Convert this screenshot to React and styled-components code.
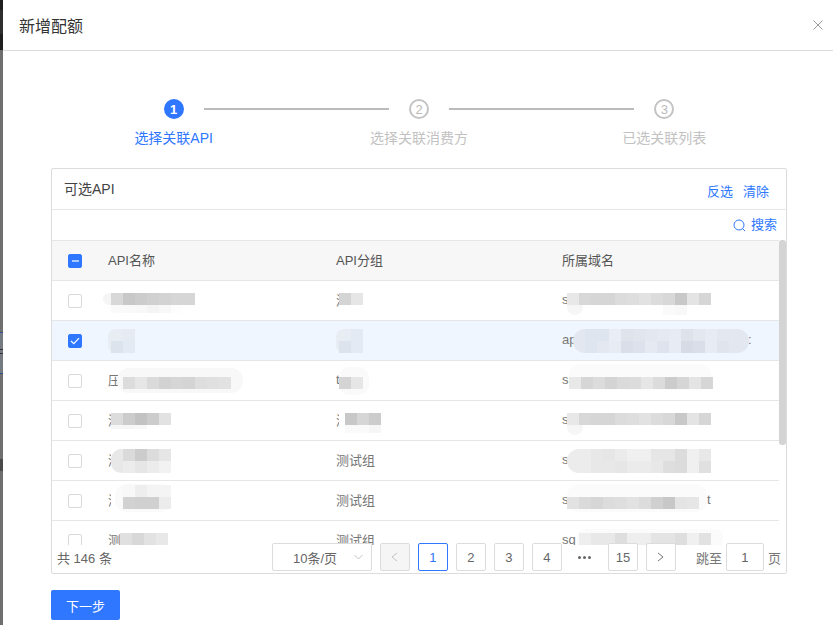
import React from 'react';
import styled, { createGlobalStyle } from 'styled-components';

const BLUE = '#2f77ff';

const GlobalStyle = createGlobalStyle`
  html, body {
    margin: 0;
    padding: 0;
    height: 100%;
    overflow: hidden;
    background: #fff;
  }
  * {
    box-sizing: border-box;
  }
  body {
    font-family: "Liberation Sans", "Noto Sans CJK SC", sans-serif;
    font-size: 13px;
    color: #666;
  }
`;

const Page = styled.div`
  display: flex;
  width: 833px;
  height: 625px;
  overflow: hidden;
`;

const Backdrop = styled.svg`
  flex: 0 0 3px;
  width: 3px;
  height: 625px;
  display: block;
`;

const Modal = styled.div`
  flex: 1;
  min-width: 0;
  background: #fff;
`;

const ModalHeader = styled.header`
  height: 51px;
  display: flex;
  align-items: center;
  justify-content: space-between;
  padding: 0 10px 0 16px;
  border-bottom: 1px solid #dcdcdc;
`;

const ModalTitle = styled.h1`
  margin: 0;
  font-size: 16px;
  font-weight: 400;
  color: #333;
`;

const ModalBody = styled.div`
  width: 736px;
  margin-left: 48px;
  padding-top: 48px;
`;

const StepTrack = styled.div`
  display: flex;
  align-items: center;
  padding: 0 112.67px;
`;

const StepDot = styled.div`
  flex: 0 0 20px;
  height: 20px;
  border-radius: 50%;
  display: flex;
  align-items: center;
  justify-content: center;
  font-size: 13px;
  line-height: 1;
  font-weight: ${props => props.$active ? 700 : 400};
  color: ${props => props.$active ? '#fff' : '#bbb'};
  background: ${props => props.$active ? BLUE : '#fff'};
  border: 2px solid ${props => props.$active ? BLUE : '#c4c4c4'};
`;

const StepLine = styled.div`
  flex: 1;
  height: 2px;
  margin: 0 20px;
  background: #bbb;
`;

const StepLabels = styled.div`
  display: grid;
  grid-template-columns: repeat(3, 1fr);
  margin-top: 9px;
`;

const StepLabel = styled.div`
  text-align: center;
  font-size: 14px;
  line-height: 20px;
  color: ${props => props.$active ? BLUE : '#c2c2c2'};
`;

const Panel = styled.section`
  margin-top: 20px;
  height: 406px;
  border: 1px solid #dcdcdc;
  border-radius: 2px;
  display: flex;
  flex-direction: column;
`;

const PanelHead = styled.div`
  height: 41px;
  flex: none;
  display: flex;
  align-items: center;
  justify-content: space-between;
  padding: 0 17px 0 12px;
  border-bottom: 1px solid #e6e6e6;
`;

const PanelTitle = styled.div`
  font-size: 14px;
  color: #444;
  padding-bottom: 2px;
`;

const PanelActions = styled.div`
  display: flex;
  gap: 10px;
  padding-top: 6px;
`;

const LinkText = styled.span`
  color: ${BLUE};
  font-size: 13px;
  line-height: 18px;
`;

const SearchBar = styled.div`
  height: 30px;
  flex: none;
  display: flex;
  align-items: center;
  justify-content: flex-end;
  gap: 5px;
  padding-right: 9px;
`;

const TableViewport = styled.div`
  height: 305px;
  flex: none;
  display: flex;
  overflow: hidden;
`;

const Table = styled.div`
  flex: 1;
  min-width: 0;
`;

const Scrollbar = styled.div`
  flex: 0 0 7px;
  background: #fff;
`;

const ScrollThumb = styled.div`
  height: 205px;
  background: #d4d4d4;
  border-radius: 3px;
`;

const Row = styled.div`
  display: grid;
  grid-template-columns: 56px 228px 226px 1fr;
  align-items: stretch;
  height: ${props => props.$head ? 41 : 40}px;
  background: ${props => props.$head ? '#f7f7f7' : props.$selected ? '#f0f6ff' : '#fff'};
  color: ${props => props.$head ? '#555' : '#777'};
  border-top: ${props => props.$head ? '1px solid #e6e6e6' : '0'};
  border-bottom: 1px solid #e6e6e6;
`;

const CheckCell = styled.div`
  display: flex;
  align-items: center;
  padding-left: 16px;
`;

const Cell = styled.div`
  position: relative;
  display: flex;
  align-items: center;
  padding-bottom: 2px;
  white-space: nowrap;
`;

const TrailingText = styled.span`
  position: absolute;
  left: ${props => props.$left}px;
`;

const Smudge = styled.svg`
  position: absolute;
  top: 0;
  left: 0;
  width: 218px;
  height: 39px;
  overflow: visible;
`;

const Check = styled.span`
  width: 14px;
  height: 14px;
  border-radius: 2px;
  display: flex;
  align-items: center;
  justify-content: center;
  background: ${props => props.$on ? BLUE : '#fff'};
  border: 1px solid ${props => props.$on ? BLUE : '#d9d9d9'};
`;

const PanelFooter = styled.div`
  position: relative;
  margin-top: -2px;
  height: 28px;
  flex: none;
  display: flex;
  align-items: center;
  padding-left: 5px;
`;

const Total = styled.span`
  margin-right: auto;
  color: #666;
`;

const SizeSelect = styled.div`
  width: 100px;
  height: 28px;
  display: flex;
  align-items: center;
  justify-content: space-between;
  padding: 0 8px 0 20px;
  margin-right: 8px;
  background: #fff;
  border: 1px solid #dcdcdc;
  border-radius: 2px;
  color: #666;
`;

const Pager = styled.div`
  display: flex;
  align-items: center;
  gap: 8px;
`;

const PageButton = styled.div`
  width: 30px;
  height: 28px;
  display: flex;
  align-items: center;
  justify-content: center;
  border-radius: 2px;
  color: ${props => props.$current ? BLUE : '#666'};
  background: ${props => props.$disabled ? '#f5f5f5' : '#fff'};
  border: 1px solid ${props => props.$current ? BLUE : '#dcdcdc'};
`;

const PageDots = styled.div`
  width: 30px;
  height: 28px;
  display: flex;
  align-items: center;
  justify-content: center;
  gap: 2px;
`;

const Dot = styled.i`
  width: 3px;
  height: 3px;
  border-radius: 50%;
  background: #666;
`;

const Jump = styled.div`
  display: flex;
  align-items: center;
  gap: 4px;
  margin-left: 20px;
  margin-right: 5px;
  color: #777;
`;

const JumpInput = styled.div`
  width: 38px;
  height: 28px;
  display: flex;
  align-items: center;
  justify-content: center;
  background: #fff;
  border: 1px solid #dcdcdc;
  border-radius: 2px;
  color: #666;
`;

const NextButton = styled.button`
  display: block;
  margin-top: 16px;
  width: 69px;
  height: 30px;
  padding: 0;
  border: 0;
  border-radius: 2px;
  background: ${BLUE};
  color: #fff;
  font: inherit;
  font-size: 13px;
`;

// Mosaic redaction: each band is a strip of 12px squares, coordinates are local to the cell
function Mosaic({ blobs = [], bands = [], clip }) {
  return (
    <Smudge aria-hidden="true">
      {clip && <rect x="3" y="8" width="12" height="24" fill="#fff" />}
      {blobs.map((b, i) => (
        <rect key={i} x={b.x} y={b.y} width={b.w} height={b.h} rx={b.r} fill={b.fill} />
      ))}
      {bands.map((band, i) =>
        band.c.map((fill, j) => (
          <rect key={`${i}-${j}`} x={band.x + j * 12} y={band.y} width="12" height={band.h || 12} fill={`#${fill}`} />
        ))
      )}
    </Smudge>
  );
}

const rows = [
  {
    name: { blobs: [{ x: -5, y: 12, w: 20, h: 12, r: 6, fill: '#f5f5f5' }], bands: [
      { x: 3, y: 12, c: ['d8d8d8', 'c8c8c8', 'cccccc', 'd0d0d0', 'd3d3d3', 'd6d6d6', 'd6d6d6'] },
      { x: 3, y: 24, h: 8, c: ['fafafa', 'f9f9f9', 'f8f8f8', 'f4f4f4', 'f8f8f8', 'fdfdfd'] },
    ] },
    group: { text: '测', clip: true, bands: [{ x: 3, y: 12, c: ['d4d4d4', 'e6e6e6'] }] },
    domain: { text: 's', blobs: [{ x: 5, y: 12, w: 16, h: 22, r: 8, fill: '#f6f6f6' }], bands: [
      { x: 5, y: 12, c: ['e8e8e8', 'd8d8d8', 'd6d6d6', 'd6d6d6', 'dcdcdc', 'dedede', 'e2e2e2', 'dcdcdc', 'd8d8d8', 'c8c8c8', 'e4e4e4', 'd6d6d6'] },
      { x: 101, y: 24, h: 10, c: ['fafafa', 'f8f8f8'] },
    ] },
  },
  {
    selected: true,
    check: true,
    name: { blobs: [{ x: 0, y: 8, w: 27, h: 24, r: 8, fill: '#e8edf4' }], bands: [
      { x: 15, y: 8, c: ['e6ebf3'] },
      { x: 3, y: 20, c: ['dde3ec', 'e4eaf3'] },
    ] },
    group: { blobs: [{ x: 0, y: 8, w: 27, h: 24, r: 8, fill: '#e8edf4' }], bands: [
      { x: 15, y: 8, c: ['e4eaf3'] },
      { x: 3, y: 20, c: ['dde3ec', 'e4eaf3'] },
    ] },
    domain: { text: 'ap', after: ':', blobs: [{ x: 11, y: 8, w: 176, h: 24, r: 12, fill: '#e2e7f0' }], bands: [
      { x: 23, y: 8, c: ['dfe5ee', 'dfe5ee', 'e8edf6', 'dee3ec', 'e0e5ee', 'e2e7f0', 'e4e9f2', 'e6ebf4', 'dde2eb', 'e2e7f0', 'e6ebf4', 'e2e7f0'] },
      { x: 23, y: 20, c: ['dfe5ee', 'e3e8f1', 'e6ebf4', 'd9dee8', 'dce1eb', 'e4e9f2', 'dee3ed', 'e6ebf4', 'd6dbe5', 'd9dee8', 'e6ebf4', 'dfe4ed'] },
    ] },
  },
  {
    name: { text: '压', blobs: [{ x: 9, y: 7, w: 126, h: 25, r: 12, fill: '#f8f8f8' }], bands: [
      { x: 15, y: 16, c: ['dcdcdc', 'e6e6e6', 'dadada', 'd2d2d2', 'd6d6d6', 'd4d4d4', 'dedede', 'e0e0e0', 'e2e2e2'] },
    ] },
    group: { text: 't', blobs: [{ x: 3, y: 6, w: 30, h: 28, r: 10, fill: '#fafafa' }], bands: [{ x: 3, y: 16, c: ['d4d4d4', 'e6e6e6'] }] },
    domain: { text: 'sl', blobs: [{ x: 7, y: 3, w: 142, h: 26, r: 10, fill: '#fbfbfb' }], bands: [
      { x: 7, y: 16, c: ['e8e8e8', 'd6d6d6', 'dcdcdc', 'd4d4d4', 'dadada', 'dcdcdc', 'e6e6e6', 'dcdcdc', 'cccccc', 'd6d6d6', 'e4e4e4', 'd6d6d6'] },
    ] },
  },
  {
    name: { text: '测', clip: true, bands: [
      { x: 3, y: 12, c: ['dcdcdc', 'cccccc', 'c2c2c2', 'cccccc', 'e2e2e2'] },
      { x: 3, y: 24, h: 4, c: ['f6f6f6', 'f6f6f6', 'f8f8f8'] },
    ] },
    group: { text: '测', clip: true, bands: [
      { x: 9, y: 12, c: ['c8c8c8', 'd6d6d6', 'cccccc'] },
      { x: 9, y: 24, h: 8, c: ['fafafa', 'fafafa', 'f6f6f6'] },
    ] },
    domain: { text: 's', blobs: [{ x: 5, y: 12, w: 16, h: 22, r: 8, fill: '#f6f6f6' }], bands: [
      { x: 5, y: 12, c: ['e8e8e8', 'd8d8d8', 'd6d6d6', 'd6d6d6', 'dcdcdc', 'dedede', 'e2e2e2', 'dcdcdc', 'd8d8d8', 'c8c8c8', 'e4e4e4', 'd6d6d6'] },
    ] },
  },
  {
    name: { text: '测', clip: true, blobs: [{ x: 3, y: 8, w: 20, h: 24, r: 10, fill: '#e8e8e8' }], bands: [
      { x: 15, y: 8, c: ['dadada', 'cccccc', 'dcdcdc', 'e6e6e6'] },
      { x: 15, y: 20, c: ['ececec', 'e6e6e6', 'ececec', 'f2f2f2'] },
    ] },
    group: { text: '测试组' },
    domain: { text: 's', blobs: [{ x: 5, y: 8, w: 60, h: 24, r: 12, fill: '#ececec' }], bands: [
      { x: 29, y: 8, c: ['e8e8e8', 'e6e6e6', 'ebebeb', 'f0f0f0', 'f0f0f0', 'e6e6e6', 'e6e6e6', 'dcdcdc', 'f0f0f0', 'e8e8e8'] },
      { x: 29, y: 20, c: ['e8e8e8', 'e8e8e8', 'e6e6e6', 'ebebeb', 'ebebeb', 'e8e8e8', 'dedede', 'dcdcdc', 'f0f0f0', 'e0e0e0'] },
    ] },
  },
  {
    name: { text: '测', clip: true, blobs: [{ x: 7, y: 3, w: 56, h: 28, r: 12, fill: '#fafafa' }], bands: [
      { x: 15, y: 4, c: ['f8f8f8', 'eeeeee', 'f4f4f4', 'f4f4f4'] },
      { x: 15, y: 16, c: ['d2d2d2', 'd0d0d0', 'd0d0d0', 'ececec'] },
    ] },
    group: { text: '测试组' },
    domain: { text: 's', after: 't', blobs: [{ x: 5, y: 3, w: 140, h: 28, r: 12, fill: '#fbfbfb' }], bands: [
      { x: 5, y: 16, c: ['e2e2e2', 'dadada', 'd6d6d6', 'dcdcdc', 'dedede', 'e2e2e2', 'dcdcdc', 'd0d0d0', 'c8c8c8', 'e4e4e4'] },
      { x: 125, y: 16, c: ['e6e6e6'] },
    ] },
  },
  {
    name: { text: '测', bands: [{ x: 12, y: 12, c: ['e0e0e0', 'd8d8d8', 'e2e2e2', 'e8e8e8'] }] },
    group: { text: '测试组' },
    domain: { text: 'sq', blobs: [{ x: 15, y: 8, w: 146, h: 20, r: 8, fill: '#fbfbfb' }], bands: [
      { x: 17, y: 12, c: ['eeeeee', 'e8e8e8', 'e8e8e8', 'dedede', 'eeeeee', 'eeeeee', 'e4e4e4', 'e4e4e4', 'dedede', 'f0f0f0', 'e2e2e2'] },
    ] },
  },
];

// After carries the last visible letter past the mosaic, e.g. the trailing "t" of a domain
const DataCell = ({ data }) => (
  <Cell>
    {data.text && <span>{data.text}</span>}
    {data.after && <TrailingText $left={data.text === 'ap' ? 186 : 145}>{data.after}</TrailingText>}
    {(data.bands || data.blobs) && <Mosaic blobs={data.blobs} bands={data.bands} clip={data.clip} />}
  </Cell>
);

const CheckMark = ({ state }) => (
  <Check $on={state !== 'off'}>
    {state === 'on' && (
      <svg width="10" height="8" viewBox="0 0 10 8" fill="none">
        <path d="M1 4l2.800 2.600L9 1.200" stroke="#fff" strokeWidth="1.2" />
      </svg>
    )}
    {state === 'mixed' && (
      <svg width="7" height="2" viewBox="0 0 7 2">
        <rect width="7" height="1.600" y="0.200" fill="#fff" opacity="0.75" />
      </svg>
    )}
  </Check>
);

const Chevron = ({ dir = 'right', color = '#777' }) => {
  const shape = {
    right: { w: 7, h: 10, d: 'M1 1l5 4-5 4' },
    left: { w: 7, h: 10, d: 'M6 1L1 5l5 4' },
    down: { w: 9, h: 6, d: 'M.5 1l4 4 4-4' },
  }[dir];
  return (
    <svg width={shape.w} height={shape.h} fill="none">
      <path d={shape.d} stroke={color} strokeWidth="1" />
    </svg>
  );
};

export default function App() {
  return (
    <>
      <GlobalStyle />
      <Page>
        <Backdrop viewBox="0 0 3 625" aria-hidden="true">
          <rect width="3" height="625" fill="#6f6f6f" />
          <rect width="3" height="50" fill="#1f1f1f" />
          <rect y="10" width="3" height="24" fill="#2e2e2e" />
          <rect y="332" width="3" height="41" fill="#757a80" />
          <rect y="332" width="3" height="1" fill="#2f4f9a" />
          <rect y="373" width="3" height="1" fill="#2f4f9a" />
          <rect y="349" width="3" height="1" fill="#333" />
          <rect y="353" width="3" height="1" fill="#333" />
          <rect y="459" width="3" height="12" fill="#4a4a4a" />
        </Backdrop>
        <Modal>
          <ModalHeader>
            <ModalTitle>新增配额</ModalTitle>
            <svg width="10" height="10" viewBox="0 0 10 10" fill="none">
              <path d="M.5.5l9 9M9.500.5l-9 9" stroke="#999" strokeWidth="1" />
            </svg>
          </ModalHeader>
          <ModalBody>
            <StepTrack>
              <StepDot $active>1</StepDot>
              <StepLine />
              <StepDot>2</StepDot>
              <StepLine />
              <StepDot>3</StepDot>
            </StepTrack>
            <StepLabels>
              <StepLabel $active>选择关联API</StepLabel>
              <StepLabel>选择关联消费方</StepLabel>
              <StepLabel>已选关联列表</StepLabel>
            </StepLabels>

            <Panel>
              <PanelHead>
                <PanelTitle>可选API</PanelTitle>
                <PanelActions>
                  <LinkText>反选</LinkText>
                  <LinkText>清除</LinkText>
                </PanelActions>
              </PanelHead>
              <SearchBar>
                <svg width="13" height="13" viewBox="0 0 13 13" fill="none">
                  <circle cx="6" cy="6" r="5" stroke={BLUE} strokeWidth="1" />
                  <path d="M9.700 9.700l2.300 2.300" stroke={BLUE} strokeWidth="1" />
                </svg>
                <LinkText>搜索</LinkText>
              </SearchBar>
              <TableViewport>
                <Table>
                  <Row $head>
                    <CheckCell><CheckMark state="mixed" /></CheckCell>
                    <Cell>API名称</Cell>
                    <Cell>API分组</Cell>
                    <Cell>所属域名</Cell>
                  </Row>
                  {rows.map((row, i) => (
                    <Row key={i} $selected={row.selected}>
                      <CheckCell><CheckMark state={row.check ? 'on' : 'off'} /></CheckCell>
                      <DataCell data={row.name} />
                      <DataCell data={row.group} />
                      <DataCell data={row.domain} />
                    </Row>
                  ))}
                </Table>
                <Scrollbar><ScrollThumb /></Scrollbar>
              </TableViewport>
              <PanelFooter>
                <Total>共 146 条</Total>
                <SizeSelect>
                  <span>10条/页</span>
                  <Chevron dir="down" color="#c4c4c4" />
                </SizeSelect>
                <Pager>
                  <PageButton $disabled><Chevron dir="left" color="#c4c4c4" /></PageButton>
                  <PageButton $current>1</PageButton>
                  <PageButton>2</PageButton>
                  <PageButton>3</PageButton>
                  <PageButton>4</PageButton>
                  <PageDots><Dot /><Dot /><Dot /></PageDots>
                  <PageButton>15</PageButton>
                  <PageButton><Chevron dir="right" /></PageButton>
                </Pager>
                <Jump>
                  <span>跳至</span>
                  <JumpInput>1</JumpInput>
                  <span>页</span>
                </Jump>
              </PanelFooter>
            </Panel>
            <NextButton>下一步</NextButton>
          </ModalBody>
        </Modal>
      </Page>
    </>
  );
}
